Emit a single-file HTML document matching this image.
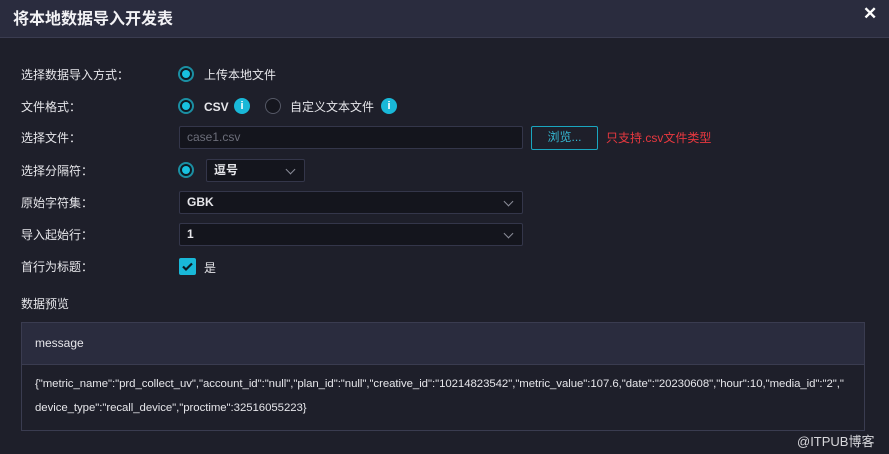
<!DOCTYPE html>
<html><head><meta charset="utf-8"><style>
*{box-sizing:border-box;margin:0;padding:0}
body{width:889px;height:454px;background:#1e1f2a;font-family:"Liberation Sans","Noto Sans CJK SC",sans-serif;color:#e6e6ea;font-size:12px;position:relative;overflow:hidden}
.hd{position:absolute;left:0;top:0;width:889px;height:38px;background:#2a2c3e;border-bottom:1px solid #3a3c50}
.title{position:absolute;left:13px;top:5px;font-size:16px;font-weight:bold;color:#f2f2f5}
.x{position:absolute;left:863px;top:4px;font-size:17px;font-weight:bold;color:#fff}
.a{position:absolute;white-space:nowrap}
.lbl{left:21px}
.radio{position:absolute;width:16px;height:16px;border-radius:50%;border:2px solid #1b8fa3;background:#0f1a22}
.radio::after{content:"";position:absolute;left:2px;top:2px;width:8px;height:8px;border-radius:50%;background:#18c1df}
.r0{position:absolute;width:16px;height:16px;border-radius:50%;border:1px solid #555866;background:#15161e}
.info{position:absolute;width:16px;height:16px;border-radius:50%;background:#19b8d8;color:#fff;font-weight:bold;font-size:11px;text-align:center;line-height:16px}
.inp{position:absolute;background:#14151d;border:1px solid #34364a;border-radius:2px;height:23px;padding-left:7px;line-height:21px;font-weight:bold}
.chev{position:absolute;right:10px;top:6px;width:7px;height:7px;border-right:1.5px solid #8a8c98;border-bottom:1.5px solid #8a8c98;transform:rotate(45deg)}
</style></head><body>
<div class="hd"><div class="title">将本地数据导入开发表</div><div class="x">✕</div></div>

<div class="a lbl" style="top:66px">选择数据导入方式：</div>
<div class="radio" style="left:178px;top:66px"></div><div class="a" style="left:204px;top:66px">上传本地文件</div>

<div class="a lbl" style="top:98px">文件格式：</div>
<div class="radio" style="left:178px;top:98px"></div><div class="a" style="left:204px;top:100px;font-weight:bold">CSV</div>
<div class="info" style="left:234px;top:98px">i</div>
<div class="r0" style="left:265px;top:98px"></div><div class="a" style="left:290px;top:98px">自定义文本文件</div>
<div class="info" style="left:381px;top:98px">i</div>

<div class="a lbl" style="top:129px">选择文件：</div>
<div class="inp" style="left:179px;top:126px;width:344px;color:#6c6e7a;font-weight:normal">case1.csv</div>
<div class="a" style="left:531px;top:126px;width:67px;height:24px;border:1.5px solid #1aa6bf;border-radius:2px;color:#35b8d3;text-align:center;line-height:21px">浏览...</div>
<div class="a" style="left:606px;top:129px;color:#e8383f">只支持.csv文件类型</div>

<div class="a lbl" style="top:162px">选择分隔符：</div>
<div class="radio" style="left:178px;top:162px"></div>
<div class="inp" style="left:206px;top:159px;width:99px">逗号<div class="chev"></div></div>

<div class="a lbl" style="top:194px">原始字符集：</div>
<div class="inp" style="left:179px;top:191px;width:344px">GBK<div class="chev"></div></div>

<div class="a lbl" style="top:226px">导入起始行：</div>
<div class="inp" style="left:179px;top:223px;width:344px">1<div class="chev"></div></div>

<div class="a lbl" style="top:258px">首行为标题：</div>
<div class="a" style="left:179px;top:258px;width:17px;height:17px;background:#19b8d8;border-radius:2px"><svg width="17" height="17"><path d="M4 8.5l3 3 6-6" stroke="#0c1a22" stroke-width="2.2" fill="none"/></svg></div>
<div class="a" style="left:204px;top:259px">是</div>

<div class="a lbl" style="top:295px">数据预览</div>
<div class="a" style="left:21px;top:322px;width:844px;height:109px;border:1px solid #3a3c50">
<div style="height:42px;background:#2a2c3e;border-bottom:1px solid #3a3c50;padding:13px 0 0 13px">message</div>
<div style="padding:13px 0 0 13px;line-height:24px;font-size:11.4px;white-space:nowrap;margin-top:-6px;letter-spacing:-0.05px">{"metric_name":"prd_collect_uv","account_id":"null","plan_id":"null","creative_id":"10214823542","metric_value":107.6,"date":"20230608","hour":10,"media_id":"2","<br>device_type":"recall_device","proctime":32516055223}</div>
</div>
<div class="a" style="left:797px;top:431px;font-size:13px;color:#d8d8dc">@ITPUB博客</div>
</body></html>
